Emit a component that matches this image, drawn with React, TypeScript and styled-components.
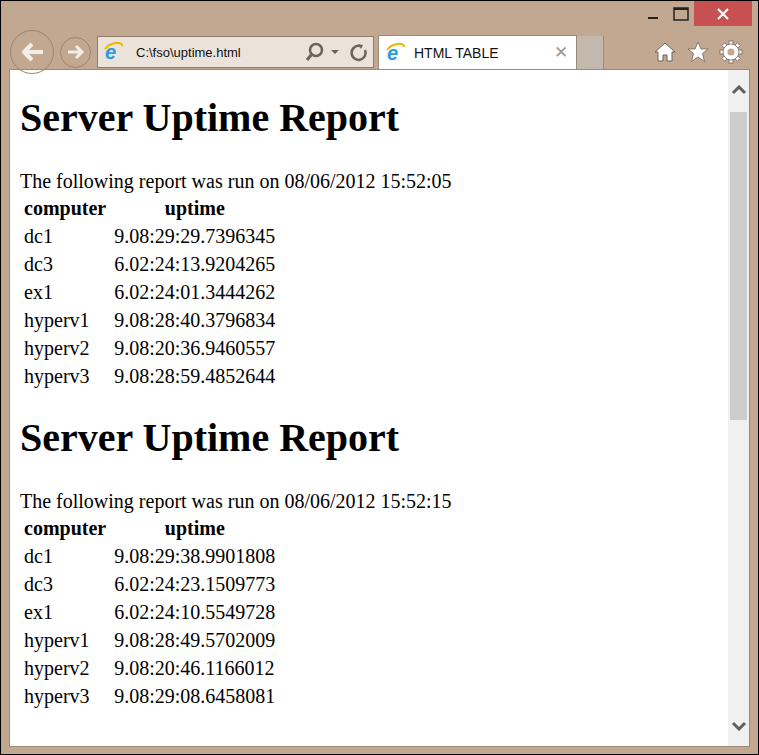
import React from "react";
import styled, { createGlobalStyle } from "styled-components";

const G = createGlobalStyle`
  html,body{margin:0;padding:0;background:#000;}
  *{box-sizing:border-box;}
`;
const Win = styled.div`
  width:759px;height:755px;border:1px solid #000;background:#c3a891;
  display:flex;flex-direction:column;position:relative;overflow:hidden;
`;
const TitleBar = styled.div`height:34px;display:flex;justify-content:flex-end;align-items:flex-start;padding-right:6px;`;
const WinBtn = styled.div<{ w: number; red?: boolean }>`
  width:${p => p.w}px;height:25px;display:flex;align-items:center;justify-content:center;
  background:${p => (p.red ? "#c75050" : "transparent")};
`;
const Toolbar = styled.div`height:34px;display:flex;align-items:center;padding-left:9px;position:relative;`;
const Circle = styled.div<{ s: number }>`
  width:${p => p.s}px;height:${p => p.s}px;border-radius:50%;border:1px solid #9c8470;
  display:flex;align-items:center;justify-content:center;flex:none;
`;
const Address = styled.div`
  margin-left:6px;width:277px;height:32px;background:#ebe3da;border:1px solid #8f7c6b;
  display:flex;align-items:center;padding-left:4px;font:13px "Liberation Sans",Arial,sans-serif;color:#111;
`;
const AddrText = styled.span`margin-left:10px;flex:1;`;
const Tab = styled.div`
  margin-left:4px;width:199px;height:34px;align-self:flex-end;background:#fff;
  border:1px solid #9c8a78;border-bottom:none;display:flex;align-items:center;padding-left:5px;
  font:14px "Liberation Sans",Arial,sans-serif;color:#111;
`;
const TabTitle = styled.span`margin-left:6px;flex:1;`;
const Close = styled.span`color:#999;font-size:17px;margin-right:8px;`;
const NewTab = styled.div`width:27px;height:33px;align-self:flex-end;background:#c3b8ad;border-right:1px solid #9c8a78;`;
const Icons = styled.div`margin-left:auto;margin-right:15px;display:flex;gap:9px;align-items:center;`;
const Content = styled.div`
  margin:0 8px;height:678px;background:#fff;border:1px solid #9c8a78;display:flex;overflow:hidden;
`;
const Page = styled.div`
  flex:1;padding:0 10px;font-family:"Liberation Serif","Times New Roman",serif;font-size:20px;color:#000;overflow:hidden;
`;
const H1 = styled.h1`font-size:40px;line-height:46px;margin:25px 0 29px;font-weight:bold;`;
const P = styled.p`margin:0;line-height:23px;`;
const Table = styled.table`border-collapse:separate;border-spacing:0;font-size:20px;margin-top:1px;`;
const Th = styled.th`height:28px;padding:0 4px;font-weight:bold;`;
const Td = styled.td`height:28px;padding:0 4px;`;
const Scroll = styled.div`width:21px;background:#f0f0f0;display:flex;flex-direction:column;align-items:center;`;
const Thumb = styled.div`width:17px;height:308px;background:#cdcdcd;margin-top:2px;`;
const Arrow = styled.div`height:40px;display:flex;align-items:center;justify-content:center;`;

const reports = [
  { t: "08/06/2012 15:52:05", rows: [["dc1","9.08:29:29.7396345"],["dc3","6.02:24:13.9204265"],["ex1","6.02:24:01.3444262"],["hyperv1","9.08:28:40.3796834"],["hyperv2","9.08:20:36.9460557"],["hyperv3","9.08:28:59.4852644"]] },
  { t: "08/06/2012 15:52:15", rows: [["dc1","9.08:29:38.9901808"],["dc3","6.02:24:23.1509773"],["ex1","6.02:24:10.5549728"],["hyperv1","9.08:28:49.5702009"],["hyperv2","9.08:20:46.1166012"],["hyperv3","9.08:29:08.6458081"]] },
];

const IE = () => (
  <svg width="24" height="24" viewBox="0 0 24 24" style={{ overflow: "visible" }}>
    <text x="3" y="19" fontSize="20" fontFamily="Liberation Sans" fontStyle="italic" fill="#2a9be0" fontWeight="bold">e</text>
    <path d="M3 9 C8 2 21 1 20 6" stroke="#f0b400" strokeWidth="2" fill="none" />
  </svg>
);

export default function App() {
  return (
    <Win>
      <G />
      <TitleBar>
        <WinBtn w={30}><svg width="12" height="12"><rect x="1" y="9" width="10" height="2" fill="#222" /></svg></WinBtn>
        <WinBtn w={26}><svg width="16" height="14"><rect x="1" y="1" width="14" height="12" fill="none" stroke="#222" strokeWidth="1.5"/><rect x="1" y="1" width="14" height="2" fill="#222"/></svg></WinBtn>
        <WinBtn w={58} red><svg width="12" height="12"><path d="M1 1L11 11M11 1L1 11" stroke="#fff" strokeWidth="2.2" /></svg></WinBtn>
      </TitleBar>
      <Toolbar>
        <Circle s={44}><svg width="26" height="22"><path d="M24 11H5M13 3L5 11L13 19" stroke="#f4ede6" strokeWidth="4" fill="none" strokeLinejoin="round"/></svg></Circle>
        <div style={{ width: 6 }} />
        <Circle s={31}><svg width="18" height="16"><path d="M1 8H15M9 2L15 8L9 14" stroke="#f4ede6" strokeWidth="3" fill="none"/></svg></Circle>
        <Address>
          <IE />
          <AddrText>C:\fso\uptime.html</AddrText>
          <svg width="70" height="20" viewBox="0 0 70 20">
            <circle cx="13" cy="8" r="6" stroke="#6d6358" strokeWidth="2.5" fill="none"/>
            <path d="M9 12L4 18" stroke="#6d6358" strokeWidth="3"/>
            <path d="M28 8h8l-4 4z" fill="#6d6358"/>
            <path d="M57 4a7 7 0 1 0 5 4" stroke="#6d6358" strokeWidth="2.5" fill="none"/>
            <path d="M55 2l5 1-2 4z" fill="#6d6358"/>
          </svg>
        </Address>
        <Tab><IE /><TabTitle>HTML TABLE</TabTitle><Close>✕</Close></Tab>
        <NewTab />
        <Icons>
          <svg width="24" height="22" viewBox="0 0 24 22"><path d="M12 2L2 11h3v9h5v-6h4v6h5v-9h3z" fill="#fff" stroke="#6d6358" strokeWidth="1"/></svg>
          <svg width="24" height="22" viewBox="0 0 24 22"><path d="M12 1l3 7h7l-5.5 4.5 2 8L12 16l-6.5 4.5 2-8L2 8h7z" fill="#fff" stroke="#6d6358" strokeWidth="0.8"/></svg>
          <svg width="24" height="24" viewBox="0 0 24 24"><g fill="#fff" stroke="#6d6358" strokeWidth="0.8">{[0,45,90,135,180,225,270,315].map(a=><rect key={a} x="10" y="1" width="4" height="6" transform={`rotate(${a} 12 12)`}/>)}<circle cx="12" cy="12" r="8"/></g><circle cx="12" cy="12" r="3.5" fill="#c3a891"/></svg>
        </Icons>
      </Toolbar>
      <Content>
        <Page>
          {reports.map((r, i) => (
            <div key={i}>
              <H1>Server Uptime Report</H1>
              <P>The following report was run on {r.t}</P>
              <Table>
                <thead><tr><Th>computer</Th><Th>uptime</Th></tr></thead>
                <tbody>{r.rows.map(([c, u]) => <tr key={c}><Td>{c}</Td><Td>{u}</Td></tr>)}</tbody>
              </Table>
            </div>
          ))}
        </Page>
        <Scroll>
          <Arrow><svg width="16" height="10"><path d="M2 8L8 2L14 8" stroke="#606060" strokeWidth="3" fill="none"/></svg></Arrow>
          <Thumb />
          <div style={{ flex: 1 }} />
          <Arrow><svg width="16" height="10"><path d="M2 2L8 8L14 2" stroke="#606060" strokeWidth="3" fill="none"/></svg></Arrow>
        </Scroll>
      </Content>
    </Win>
  );
}
